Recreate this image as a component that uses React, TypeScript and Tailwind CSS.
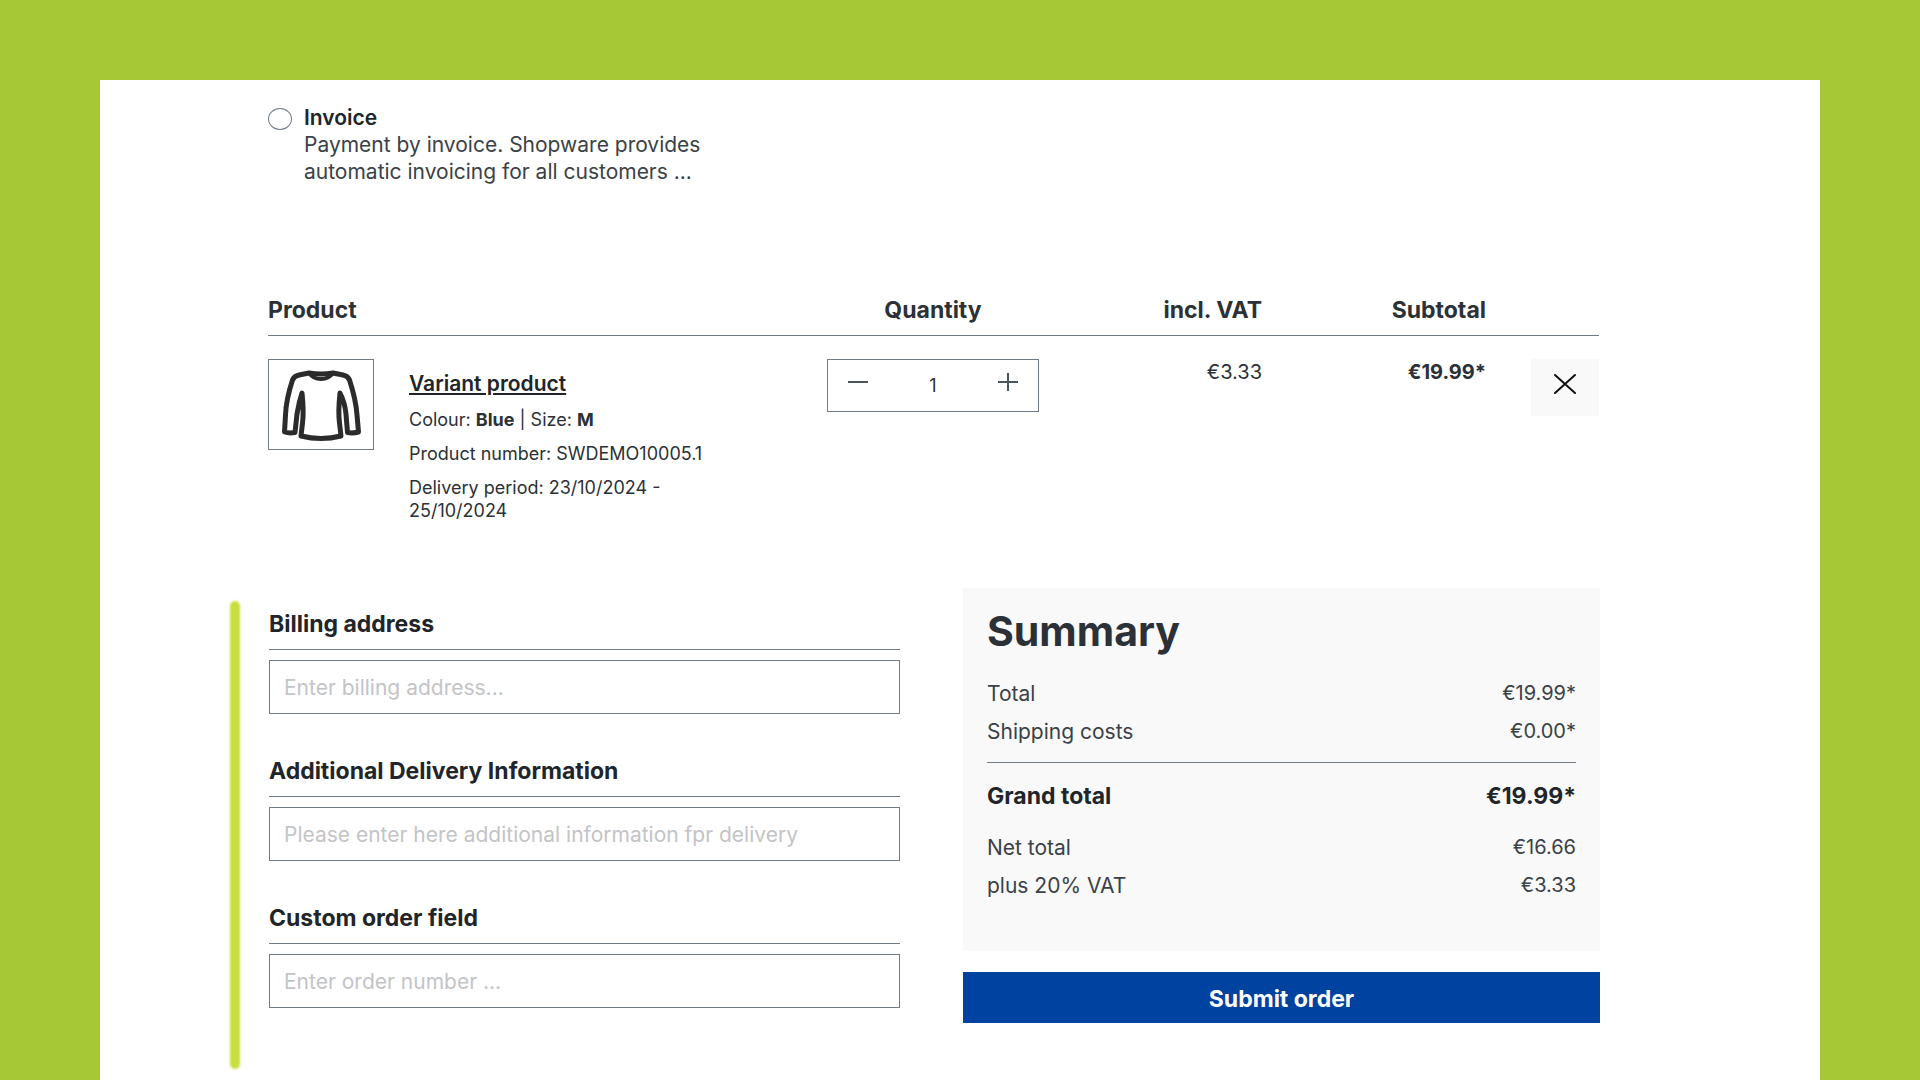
import { useState } from "react";

const fields = [
  { id: "billing", label: "Billing address", placeholder: "Enter billing address..." },
  {
    id: "delivery",
    label: "Additional Delivery Information",
    placeholder: "Please enter here additional information fpr delivery",
  },
  { id: "custom", label: "Custom order field", placeholder: "Enter order number ..." },
];

function PaymentMethod() {
  return (
    <div className="flex items-start gap-3">
      <input
        type="radio"
        id="invoice"
        name="payment"
        className="mt-1 h-[22px] w-6 shrink-0 appearance-none rounded-[50%] border border-[#6f7b86] bg-white checked:border-[7px] checked:border-[#0042a0]"
      />
      <label htmlFor="invoice" className="max-w-[420px] text-[21px] leading-[27px]">
        <span className="block font-semibold text-[#212529]">Invoice</span>
        Payment by invoice. Shopware provides automatic invoicing for all customers ...
      </label>
    </div>
  );
}

function Shirt() {
  return (
    <svg
      viewBox="0 0 104 89"
      className="h-full w-full"
      fill="none"
      stroke="#2b2b2b"
      strokeWidth="5"
      strokeLinejoin="round"
      strokeLinecap="round"
      role="img"
      aria-label="Long-sleeved shirt"
    >
      <path d="M40 13 L30 15 Q25 16 23.500 20 Q17 40 16.500 55 L15.500 72 Q20 73.500 26 72.500 L28 54 Q30 42 33 33 Q35 52 33.500 63 L32 76 Q52 81 72 76 L70.500 63 Q69 52 71 33 Q76 43 77 54 L78.500 72.500 Q84 73.500 89.500 72 L88 55 Q87 40 80.500 20 Q79 16 74 15 L64 13 Q52 15 40 13 Z" />
      <path d="M40 13 Q44 19 52 19 Q60 19 64 13" strokeWidth="4" />
    </svg>
  );
}

function CartTable() {
  const [quantity, setQuantity] = useState(1);
  return (
    <table className="w-full table-fixed border-collapse text-[#2b3136]">
      <colgroup>
        <col />
        <col className="w-[212px]" />
        <col className="w-[223px]" />
        <col className="w-[224px]" />
        <col className="w-[113px]" />
      </colgroup>
      <thead>
        <tr className="border-b border-[#6f7b86] text-[23px] leading-7 text-[#2b3136]">
          <th className="pb-[11px] text-left font-bold">Product</th>
          <th className="pb-[11px] text-center font-bold">Quantity</th>
          <th className="pb-[11px] text-right font-bold">incl. VAT</th>
          <th className="pb-[11px] text-right font-bold">Subtotal</th>
          <th className="pb-[11px]" aria-label="Remove" />
        </tr>
      </thead>
      <tbody>
        <tr className="align-top">
          <td className="pt-[23px]">
            <div className="flex items-start gap-[35px]">
              <div className="h-[91px] w-[106px] shrink-0 border border-[#6f7b86]">
                <Shirt />
              </div>
              <div className="mt-[11px] flex max-w-[310px] flex-col gap-[11px] text-lg leading-[23px]">
                <a href="#product" className="-mb-px text-[21px] leading-7 font-semibold text-[#212529] underline">
                  Variant product
                </a>
                <p>
                  Colour: <b className="font-bold">Blue</b> | Size: <b className="font-bold">M</b>
                </p>
                <p>Product number: SWDEMO10005.1</p>
                <p>
                  Delivery period: 23/10/2024 -
                  <br />
                  25/10/2024
                </p>
              </div>
            </div>
          </td>
          <td className="pt-[23px]">
            <div className="flex h-[53px] w-full items-center justify-between border border-[#6f7b86] px-5">
              <button
                type="button"
                aria-label="Decrease quantity"
                className="-mt-2"
                onClick={() => setQuantity(Math.max(1, quantity - 1))}
              >
                <svg viewBox="0 0 20 20" className="size-5" stroke="#4a545b" strokeWidth="2">
                  <path d="M0 10h20" />
                </svg>
              </button>
              <input
                aria-label="Quantity"
                value={quantity}
                onChange={(e) => setQuantity(Number(e.target.value) || 1)}
                className="w-16 bg-transparent text-center text-lg outline-none"
              />
              <button
                type="button"
                aria-label="Increase quantity"
                className="-mt-2"
                onClick={() => setQuantity(quantity + 1)}
              >
                <svg viewBox="0 0 20 20" className="size-5" stroke="#4a545b" strokeWidth="2">
                  <path d="M0 10h20M10 1v18" />
                </svg>
              </button>
            </div>
          </td>
          <td className="pt-[23px] text-right text-xl leading-[27px]">€3.33</td>
          <td className="pt-[23px] text-right text-xl leading-[27px] font-bold">€19.99*</td>
          <td className="pt-[23px]">
            <button
              type="button"
              aria-label="Remove product"
              className="ml-auto flex h-[57px] w-[68px] items-center justify-center bg-[#f9f9f9] pb-2"
            >
              <svg viewBox="0 0 22 20" className="h-5 w-[22px]" stroke="#111" strokeWidth="2" strokeLinecap="round">
                <path d="M1 1l20 18M21 1L1 19" />
              </svg>
            </button>
          </td>
        </tr>
      </tbody>
    </table>
  );
}

function OrderFields() {
  return (
    <form className="flex flex-[631] flex-col gap-[43px] pt-[22px]">
      {fields.map((f) => (
        <div key={f.id}>
          <label
            htmlFor={f.id}
            className="mb-[10px] block border-b border-[#6f7b86] pb-[11px] text-[23px] leading-7 font-bold text-[#212529]"
          >
            {f.label}
          </label>
          <input
            id={f.id}
            type="text"
            placeholder={f.placeholder}
            className="block h-[54px] w-full border border-[#6f7b86] bg-white px-[14px] text-[21px] outline-none placeholder:text-[#c3c4c6]"
          />
        </div>
      ))}
    </form>
  );
}

function Row({ label, value }: { label: string; value: string }) {
  return (
    <div className="flex justify-between text-[21px] leading-[27px]">
      <dt>{label}</dt>
      <dd className="text-xl leading-[27px]">{value}</dd>
    </div>
  );
}

function Summary() {
  return (
    <aside className="flex-[637]">
      <div className="bg-[#f9f9f9] px-6 pt-5 pb-[52px]">
        <h2 className="text-[41px] leading-[46px] font-bold text-[#2b3136]">Summary</h2>
        <dl className="mt-[26px]">
          <Row label="Total" value="€19.99*" />
          <div className="h-[11px]" />
          <Row label="Shipping costs" value="€0.00*" />
          <div className="mt-[17px] flex justify-between border-t border-[#6f7b86] pt-[19px] text-[23px] leading-7 font-bold text-[#212529]">
            <dt>Grand total</dt>
            <dd>€19.99*</dd>
          </div>
          <div className="h-6" />
          <Row label="Net total" value="€16.66" />
          <div className="h-[11px]" />
          <Row label="plus 20% VAT" value="€3.33" />
        </dl>
      </div>
      <button type="submit" className="mt-[21px] h-[51px] w-full bg-[#0042a0] pt-1 text-[23px] font-bold text-white">
        Submit order
      </button>
    </aside>
  );
}

export default function App() {
  return (
    <div className="flex min-h-screen flex-col bg-[#a6c836] px-[100px] pt-20 font-['Inter',sans-serif] text-[#3a4147]">
      <main className="flex-1 bg-white pt-6 pr-[220px] pb-[10px] pl-[168px]">
        <PaymentMethod />
        <div className="mt-[111px] pr-px">
          <CartTable />
        </div>
        <div className="mt-[66px] -ml-[38px] flex items-start">
          <div className="mt-[13px] mr-[29px] w-[10px] shrink-0 self-stretch rounded-full bg-[#c8de3c] blur-[1px]" />
          <div className="flex flex-1 items-start gap-[63px] pb-[46px]">
            <OrderFields />
            <Summary />
          </div>
        </div>
      </main>
    </div>
  );
}
